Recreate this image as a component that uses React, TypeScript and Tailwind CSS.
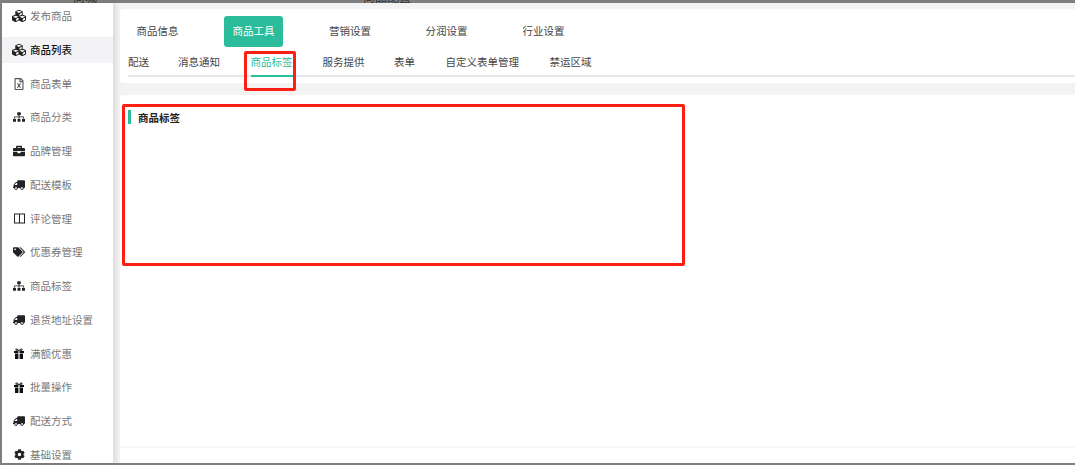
import {
  FaBriefcase,
  FaCog,
  FaCubes,
  FaRegFileExcel,
  FaSitemap,
  FaTags,
  FaTruck,
} from "react-icons/fa";

function TruckIcon() {
  return <FaTruck className="-scale-x-100 text-[12px]" />;
}

function ColumnsIcon() {
  return (
    <svg width="11" height="11" viewBox="0 0 11 11" fill="none" stroke="#222" strokeWidth="1">
      <rect x="0.5" y="1" width="10" height="9" />
      <path d="M5.5 1v9" />
    </svg>
  );
}

function GiftIcon() {
  return (
    <svg width="10" height="11" viewBox="0 0 10 11" fill="#111">
      <path d="M0 3h4.4v2H0zM5.6 3H10v2H5.6zM1 5.6h3.4V11H1zM5.6 5.6H9V11H5.6z" />
      <path d="M5 3 2.4 2.8C1 2.5 1.2.4 2.6.4 3.8.4 4.6 1.6 5 2.6 5.4 1.6 6.2.4 7.4.4 8.8.4 9 2.5 7.6 2.8zM3.9 2.2 2.9 1.3c-.6 0-.6.9 0 .9zM6.1 2.2h1c.6 0 .6-.9 0-.9z" fillRule="evenodd" />
    </svg>
  );
}

const menu = [
  { label: "发布商品", icon: <FaCubes className="text-[14px]" /> },
  { label: "商品列表", icon: <FaCubes className="text-[14px]" />, active: true },
  { label: "商品表单", icon: <FaRegFileExcel className="text-[12px] text-[#555]" /> },
  { label: "商品分类", icon: <FaSitemap className="text-[12px]" /> },
  { label: "品牌管理", icon: <FaBriefcase className="text-[12px]" /> },
  { label: "配送模板", icon: <TruckIcon /> },
  { label: "评论管理", icon: <ColumnsIcon /> },
  { label: "优惠券管理", icon: <FaTags className="text-[12px]" /> },
  { label: "商品标签", icon: <FaSitemap className="text-[12px]" /> },
  { label: "退货地址设置", icon: <TruckIcon /> },
  { label: "满额优惠", icon: <GiftIcon /> },
  { label: "批量操作", icon: <GiftIcon /> },
  { label: "配送方式", icon: <TruckIcon /> },
  { label: "基础设置", icon: <FaCog className="text-[11px]" /> },
];

const topTabs = [
  { label: "商品信息", className: "ml-[16px] w-[43px]" },
  { label: "商品工具", className: "ml-[45px] w-[59px] h-[31px] rounded-[3px] bg-[#2bbd9b] text-white" },
  { label: "营销设置", className: "ml-[45.5px] w-[43px]" },
  { label: "分润设置", className: "ml-[53.5px] w-[43px]" },
  { label: "行业设置", className: "ml-[54px] w-[43px]" },
];

const subTabs = [
  { label: "配送", className: "border-transparent" },
  { label: "消息通知", className: "ml-[29px] border-transparent" },
  { label: "商品标签", className: "ml-[30.5px] border-[#2bbd9b] text-[#2bbd9b]" },
  { label: "服务提供", className: "ml-[30px] border-transparent" },
  { label: "表单", className: "ml-[29.5px] border-transparent" },
  { label: "自定义表单管理", className: "ml-[30.5px] border-transparent" },
  { label: "禁运区域", className: "ml-[30.5px] border-transparent" },
];

export default function App() {
  return (
    <div
      className="relative flex h-[465px] w-[1075px] overflow-hidden bg-[#808080] pb-[2px] pl-[2px] pt-[3px] text-[10.5px] text-[#444]"
      style={{ fontFamily: '"Noto Sans CJK SC", "Liberation Sans", sans-serif' }}
    >
      {/* Window title, mostly cut off by the top of the capture */}
      <div className="absolute left-0 top-0 flex h-[3px] w-full items-end overflow-hidden text-[12px] leading-none text-[#333]">
        <span className="ml-[73px]">商城</span>
        <span className="ml-[266px]">商品配置</span>
      </div>

      {/* Sidebar */}
      <aside className="relative z-10 w-[111px] shrink-0 overflow-hidden bg-white shadow-[3px_0_5px_rgba(0,0,0,0.1)]">
        <ul>
          {menu.map((item) => (
            <li
              key={item.label}
              className={`mb-[7.75px] flex h-[26px] items-center pl-[9px] ${
                item.active ? "bg-[#f3f3f5] font-medium text-[#111]" : "text-[#777]"
              }`}
            >
              <span className="flex w-[19px] justify-center pr-[3px] text-[#222]">{item.icon}</span>
              {item.label}
            </li>
          ))}
        </ul>
      </aside>

      {/* Content */}
      <main className="flex min-w-0 flex-1 flex-col bg-[#f3f3f3] pt-[6px]">
        <div className="ml-[7px] flex h-[74px] flex-col rounded-l-[3px] bg-white">
          <div className="flex h-[44px] items-center">
            {topTabs.map((tab) => (
              <button
                key={tab.label}
                className={`flex shrink-0 items-center justify-center whitespace-nowrap ${tab.className}`}
              >
                {tab.label}
              </button>
            ))}
          </div>
          <div className="ml-[8px] flex h-[24px] border-b-2 border-[#e4e7ec]">
            {subTabs.map((tab) => (
              <span
                key={tab.label}
                className={`-mb-[2px] flex h-[24px] items-start whitespace-nowrap border-b-2 pt-[1px] ${tab.className}`}
              >
                {tab.label}
              </span>
            ))}
          </div>
        </div>

        <section className="ml-[7px] mt-[12px] h-[353px] rounded-tl-[3px] border-b-2 border-[#f8f8f8] bg-white pl-[8px] pt-[15px]">
          <h2 className="flex h-[14px] items-center border-l-[3px] border-[#2bbd9b] pl-[7px] pt-[1px] font-bold text-[#222]">
            商品标签
          </h2>
        </section>
        <div className="ml-[7px] flex-1 bg-white" />
      </main>

      {/* Red annotation boxes */}
      <div className="absolute left-[244px] top-[51px] z-20 h-[40px] w-[52px] rounded-[2px] border-[3px] border-[#fb1f14]" />
      <div className="absolute left-[122px] top-[104px] z-20 h-[162px] w-[563px] rounded-[2px] border-[3px] border-[#fb1f14]" />
    </div>
  );
}
